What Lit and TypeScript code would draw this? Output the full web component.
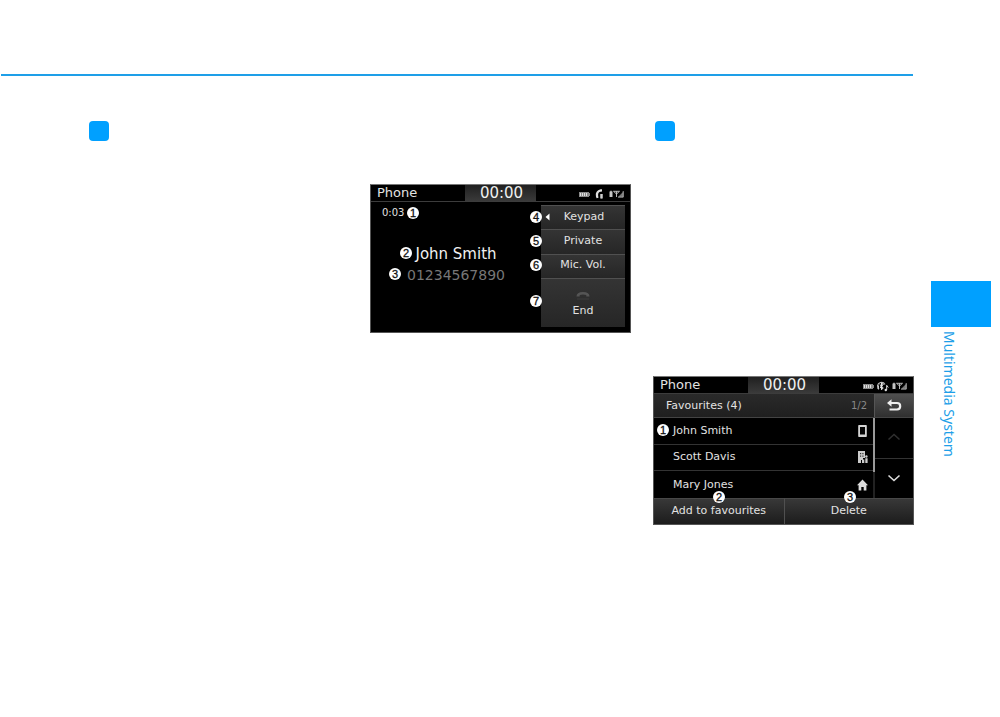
import { LitElement, html, css, svg } from "lit";
import { customElement, property } from "lit/decorators.js";

interface Mark { n: number; x: number; y: number; }

const battery = svg`<svg width="11" height="7" viewBox="0 0 11 7" aria-hidden="true">
  <path d="M0 1h10v1h1v3h-1v1H0z" fill="#8a8a8a"/>
  <path d="M1.500 2v3M3.500 2v3M5.500 2v3M7.500 2v3" stroke="#e0e0e0" stroke-width="1"/></svg>`;

const callIcon = svg`<svg width="9" height="10" viewBox="0 0 9 10" aria-hidden="true">
  <path d="M7 .3C3 .3.8 2.800.8 5.800q0 2 .8 3.500l1.900-.5-.4-2.600C3 4.300 4 3 5.500 2.800l1.500-.2z" fill="#e0e0e0"/>
  <path d="M5 5h3v4.500H5z" fill="#999"/><path d="M6.500 5v4.500" stroke="#ddd" stroke-width=".8"/></svg>`;

const audioIcon = svg`<svg width="12" height="11" viewBox="0 0 12 11" aria-hidden="true">
  <path d="M.5 5.500a4 4 0 0 1 7.500-2" fill="none" stroke="#bbb" stroke-width="1.100"/>
  <path d="M.3 4.500h1.700v4H1.200L.3 7.500z" fill="#ccc"/>
  <path d="M3 3.500l3.200 3.500-1.700 1.800V1.800l1.700 1.700L3 7.200" fill="#777" stroke="#e6e6e6" stroke-width="1"/>
  <path d="M9.700 9V4.300l1.600 2.200" fill="none" stroke="#ddd" stroke-width="1"/><circle cx="8.800" cy="9" r="1.200" fill="#ddd"/></svg>`;

const signal = svg`<svg width="15" height="8" viewBox="0 0 15 8" aria-hidden="true">
  <path d="M.5 1.500H1.300V.8h1.400v.7h.8V7h-3z" fill="#c4c4c4"/>
  <path d="M4.500 1.300h6L7.500 4zM7.500 1.300V7" fill="none" stroke="#ccc" stroke-width=".9"/>
  <path d="M9 7l5.500-5.500V7z" fill="#777"/><path d="M14.200 1v6.200H9" fill="none" stroke="#bbb" stroke-width=".8"/></svg>`;

const mobile = svg`<svg width="11" height="14" viewBox="0 0 11 14" aria-hidden="true">
  <path d="M2 1h7q.8 0 .8.800v10.400q0 .8-.8.800H2q-.8 0-.8-.8V1.800Q1.200 1 2 1z" fill="#d4d4d4"/><path d="M3 3h5v7.500H3z" fill="#050505"/></svg>`;

const office = svg`<svg width="11" height="14" viewBox="0 0 11 14" aria-hidden="true">
  <path d="M1 1h7v7H6v2H4v3H1z" fill="#ccc"/>
  <path d="M3 3h1.200v1.300H3zM5.300 3h1.200v1.300H5.300zM3 5.500h1.200v1.300H3zM5.300 5.500h1.200v1.300H5.300z" fill="#333"/>
  <circle cx="9.400" cy="6.500" r="1.200" fill="#ccc"/><path d="M8.300 8.300h2.300V13H8.300zM5 9.500h2.300V13H5z" fill="#ccc"/></svg>`;

const home = svg`<svg width="11" height="14" viewBox="0 0 11 14" aria-hidden="true">
  <path d="M5.500 1.500L0 7.300h1.600V12.500h2.700V9h2.400v3.500h2.700V7.300H11z" fill="#ddd"/></svg>`;

const screenStyles = css`
  :host { display: block; font-family: "DejaVu Sans", sans-serif; color: #e2e2e2; }
  * { box-sizing: border-box; }
  button { font: inherit; font-size: 11px; line-height: 14px; color: inherit; margin: 0; padding: 0; border: 0; background: none; cursor: pointer; }
  svg { display: block; }
`;

@customElement("device-screen")
class DeviceScreen extends LitElement {
  @property() kind = "call";
  @property({ attribute: false }) marks: Mark[] = [];

  static styles = [screenStyles, css`
    .screen { position: relative; background: #000; border: 1px solid #555; border-top-color: #777; }
    .top { display: grid; grid-template-columns: 1fr 71px 1fr; height: 17px; border-bottom: 1px solid #3c3c3c; }
    .title { font-size: 13px; line-height: 16px; padding-left: 6px; }
    .clock { font-size: 15px; line-height: 16px; padding-left: 2px; text-align: center; background: linear-gradient(#202020, #3a3a3a); color: #f0f0f0; }
    .status { display: flex; align-items: center; justify-content: flex-end; gap: 5px; padding-right: 6px; padding-top: 2px; }
    .audio { gap: 3px; }
    .mark { position: absolute; width: 12px; height: 12px; margin: -6px 0 0 -6px; border-radius: 50%; background: #fff; color: #111; font: 11px/12px "Liberation Sans", sans-serif; -webkit-text-stroke: 0.3px #111; text-align: center; }
  `];

  render() {
    return html`<section class="screen">
      <header class="top">
        <div class="title">Phone</div><div class="clock">00:00</div>
        <div class="status ${this.kind}">${battery}${this.kind === "call" ? callIcon : audioIcon}${signal}</div>
      </header>
      <slot></slot>
      ${this.marks.map((m) => html`<span class="mark" style="left:${m.x}px;top:${m.y}px">${m.n}</span>`)}
    </section>`;
  }
}

@customElement("call-panel")
class CallPanel extends LitElement {
  static styles = [screenStyles, css`
    .body { display: grid; grid-template-columns: 1fr 84px; padding: 3px 5px 5px 0; height: 130px; }
    .info { display: flex; flex-direction: column; }
    .time { font-size: 10px; line-height: 12px; padding: 2px 0 0 11px; }
    .caller { padding-top: 25px; text-align: center; }
    .name { font-size: 15px; line-height: 20px; color: #f0f0f0; }
    .number { font-size: 14px; line-height: 22px; color: #777; }
    .actions { display: grid; grid-template-rows: 1fr 1fr 1fr 2fr; }
    .action { padding-bottom: 2px; background: linear-gradient(#343434, #262626); border-top: 1px solid #505050; }
    .keypad { display: grid; grid-template-columns: 12px 1fr 10px; align-items: center; }
    .end { display: flex; flex-direction: column; align-items: center; justify-content: center; gap: 4px; padding-top: 4px; }
    .arrow { justify-self: center; }
  `];

  render() {
    return html`<div class="body">
      <div class="info">
        <div class="time">0:03</div>
        <div class="caller"><div class="name">John Smith</div><div class="number">01234567890</div></div>
      </div>
      <div class="actions">
        <button class="action keypad"><svg class="arrow" width="5" height="8" viewBox="0 0 5 8" aria-hidden="true"><path d="M4.500.5v7L.5 4z" fill="#fff"/></svg><span>Keypad</span></button>
        <button class="action">Private</button>
        <button class="action">Mic. Vol.</button>
        <button class="action end"><svg width="16" height="9" viewBox="0 0 16 9" aria-hidden="true"><path d="M1.500 5.500Q1.500 1 8 1t6.500 4.500h-3.200V4Q8 2.800 4.700 4v1.500z" fill="#555"/><path d="M2 8h12" stroke="#3c3c3c" stroke-width="1"/></svg>End</button>
      </div>
    </div>`;
  }
}

@customElement("favourites-panel")
class FavouritesPanel extends LitElement {
  static styles = [screenStyles, css`
    .bar { display: grid; grid-template-columns: 1fr 39px; height: 24px; background: linear-gradient(#2a2a2a, #1f1f1f); border-bottom: 1px solid #444; }
    .heading { display: flex; align-items: center; justify-content: space-between; padding: 0 7px 0 12px; font-size: 11px; }
    .page { font-size: 10px; color: #888; }
    .back { display: grid; place-items: center; background: linear-gradient(#505050, #303030); border-left: 1px solid #555; }
    .content { display: grid; grid-template-columns: 1fr 2px 38px; height: 80px; }
    .list { list-style: none; margin: 0; padding: 0; display: grid; grid-template-rows: 1fr 1fr 1fr; }
    .item { border-bottom: 1px solid #333; display: grid; }
    .item:last-child { border-bottom: 0; }
    .contact { display: flex; align-items: center; justify-content: space-between; padding: 0 5px 0 19px; }
    .track { background: #222; }
    .thumb { height: 67%; background: #999; }
    .scroll { display: grid; grid-template-rows: 1fr 1fr; }
    .step { display: grid; place-items: center; padding-bottom: 2px; }
    .down { border-top: 1px solid #333; }
    .footer { display: grid; grid-template-columns: 1fr 1fr; height: 26px; }
    .command { padding-bottom: 2px; background: linear-gradient(#383838, #1c1c1c); border-top: 1px solid #484848; }
    .delete { border-left: 1px solid #505050; }
  `];

  contacts = [
    { name: "John Smith", icon: mobile },
    { name: "Scott Davis", icon: office },
    { name: "Mary Jones", icon: home },
  ];

  render() {
    return html`
      <div class="bar">
        <div class="heading"><span>Favourites (4)</span><span class="page">1/2</span></div>
        <button class="back" aria-label="Back"><svg width="16" height="13" viewBox="0 0 16 13" aria-hidden="true"><path d="M4 4h7q3.200 0 3.200 3.200T11 10.500H3.500" fill="none" stroke="#eee" stroke-width="2.200"/><path d="M5.500.2v7.600L1 4z" fill="#eee"/></svg></button>
      </div>
      <div class="content">
        <ul class="list">${this.contacts.map((c) => html`<li class="item"><button class="contact"><span>${c.name}</span>${c.icon}</button></li>`)}</ul>
        <div class="track"><div class="thumb"></div></div>
        <div class="scroll">
          <button class="step" aria-label="Previous page"><svg width="14" height="8" viewBox="0 0 14 8" aria-hidden="true"><path d="M1.500 6.500L7 1.500l5.500 5" fill="none" stroke="#303030" stroke-width="1.500"/></svg></button>
          <button class="step down" aria-label="Next page"><svg width="14" height="8" viewBox="0 0 14 8" aria-hidden="true"><path d="M1.500 1.500L7 6.500l5.500-5" fill="none" stroke="#ddd" stroke-width="1.600"/></svg></button>
        </div>
      </div>
      <div class="footer"><button class="command">Add to favourites</button><button class="command delete">Delete</button></div>`;
  }
}

@customElement("app-root")
class AppRoot extends LitElement {
  static styles = css`
    :host { display: block; background: #fff; min-height: 100vh; }
    * { box-sizing: border-box; }
    .page { display: grid; grid-template-columns: 1fr 86px; }
    .rule { height: 76px; border-bottom: 2px solid #1e9fe8; margin: 0 1px; }
    .columns { display: grid; grid-template-columns: repeat(3, 1fr); gap: 22px; padding-left: 87px; }
    .lead { padding-top: 45px; }
    .middle { padding-top: 108px; }
    .bullet { width: 20px; height: 20px; margin-left: 2px; border-radius: 4px; background: #00a0ff; }
    .figure { margin-top: 235px; }
    .side { padding: 281px 9px 0 17px; }
    .tab { height: 46px; background: #00a0ff; }
    .chapter { writing-mode: vertical-rl; margin-top: 4px; margin-left: 8px; font-family: "Noto Sans", sans-serif; font-size: 14px; line-height: 20px; color: #1e9fe8; white-space: nowrap; }
  `;

  callMarks: Mark[] = [
    { n: 1, x: 42, y: 28 }, { n: 2, x: 35, y: 68 }, { n: 3, x: 24, y: 89 }, { n: 4, x: 165, y: 32 },
    { n: 5, x: 165, y: 56 }, { n: 6, x: 165, y: 80 }, { n: 7, x: 165, y: 116 },
  ];
  favouriteMarks: Mark[] = [{ n: 1, x: 9, y: 53 }, { n: 2, x: 65, y: 120 }, { n: 3, x: 196, y: 120 }];

  render() {
    return html`<div class="page">
      <main>
        <div class="rule"></div>
        <div class="columns">
          <div class="lead"><div class="bullet"></div></div>
          <div class="middle"><device-screen kind="call" .marks=${this.callMarks}><call-panel></call-panel></device-screen></div>
          <div class="lead"><div class="bullet"></div>
            <device-screen class="figure" kind="audio" .marks=${this.favouriteMarks}><favourites-panel></favourites-panel></device-screen>
          </div>
        </div>
      </main>
      <aside class="side"><div class="tab"></div><div class="chapter">Multimedia System</div></aside>
    </div>`;
  }
}
